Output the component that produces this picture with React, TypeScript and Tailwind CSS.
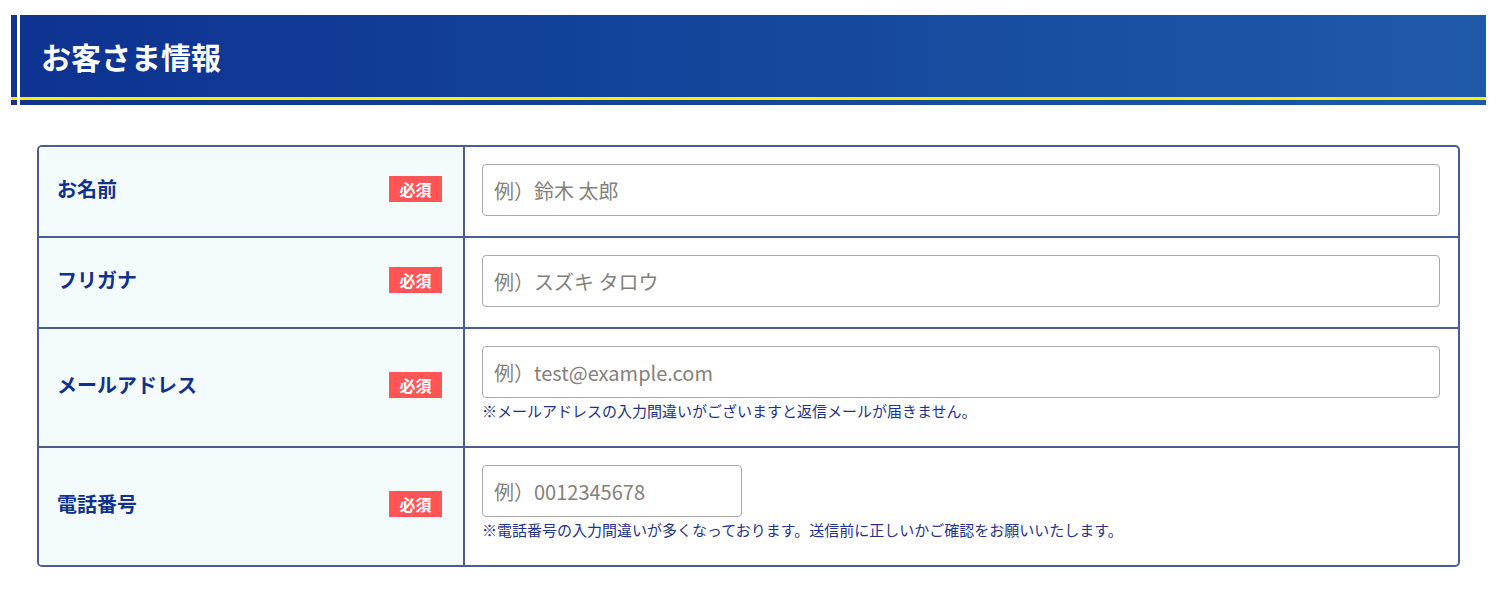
import React from 'react';

const font = { fontFamily: '"Noto Sans CJK JP", "Noto Sans", sans-serif' };

type Field = {
  label: string;
  placeholder: string;
  note?: string;
  short?: boolean;
  tall?: boolean;
};

const fields: Field[] = [
  { label: 'お名前', placeholder: '例）鈴木 太郎' },
  { label: 'フリガナ', placeholder: '例）スズキ タロウ' },
  {
    label: 'メールアドレス',
    placeholder: '例）test@example.com',
    note: '※メールアドレスの入力間違いがございますと返信メールが届きません。',
    tall: true,
  },
  {
    label: '電話番号',
    placeholder: '例）0012345678',
    note: '※電話番号の入力間違いが多くなっております。送信前に正しいかご確認をお願いいたします。',
    short: true,
    tall: true,
  },
];

const Row = ({ field, first }: { field: Field; first: boolean }) => (
  <div
    className={`flex ${
      first ? 'h-[89px]' : field.tall ? 'h-[119px] border-t-2 border-[#495d8f]' : 'h-[91px] border-t-2 border-[#495d8f]'
    }`}
  >
    <div className="flex w-[426px] items-center justify-between border-r-2 border-[#495d8f] bg-[#f3fbfd] pb-[6px] pl-[18px] pr-[21px]">
      <span className="text-[20px] font-bold text-[#12318a]">{field.label}</span>
      <span className="flex h-[26px] w-[53px] items-center justify-center bg-[#ff5555] text-[16px] font-bold text-white">
        必須
      </span>
    </div>
    <div className="flex flex-1 flex-col pl-[17px] pr-[18px] pt-[17px]">
      <input
        type="text"
        placeholder={field.placeholder}
        className={`h-[52px] rounded-[4px] border border-[#aaaaaa] px-[11px] text-[20px] placeholder:text-[#857f7a] outline-none ${
          field.short ? 'w-[260px]' : 'w-full'
        }`}
        style={font}
      />
      {field.note && (
        <p className="mt-[3px] text-[15px] leading-5 text-[#1f3388]">{field.note}</p>
      )}
    </div>
  </div>
);

export default function App() {
  return (
    <div className="min-h-[601px] bg-white pt-[15px]" style={font}>
      <div className="ml-[11px] mr-[19px] flex h-[90px]">
        <div className="flex w-[6px] flex-col bg-[#0f3590] pb-[5px]">
          <div className="flex-1 border-b-[3px] border-[#ffee00]" />
        </div>
        <div className="w-[3px]" />
        <div className="flex flex-1 flex-col bg-gradient-to-r from-[#0e3290] to-[#1f5aa8] pb-[5px]">
          <div className="flex flex-1 items-center border-b-[3px] border-[#ffee00] pl-[21px]">
            <h1 className="text-[30px] font-bold text-white">お客さま情報</h1>
          </div>
        </div>
      </div>

      <div className="ml-[37px] mr-[45px] mt-[40px] overflow-hidden rounded-[5px] border-2 border-[#495d8f]">
        {fields.map((f, i) => (
          <Row key={f.label} field={f} first={i === 0} />
        ))}
      </div>
    </div>
  );
}
